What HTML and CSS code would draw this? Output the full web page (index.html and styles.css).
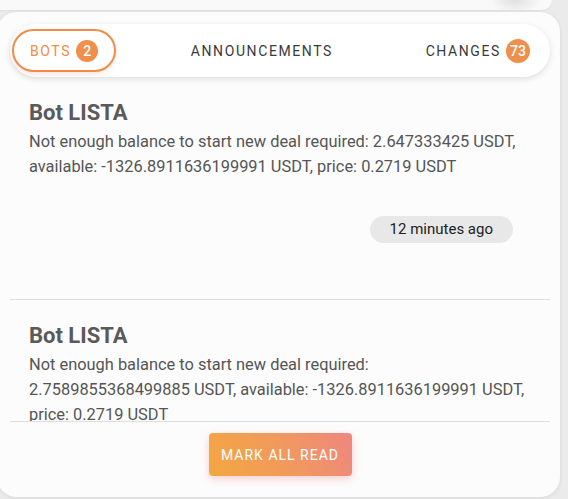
FILE: index.html
```html
<!DOCTYPE html>
<html lang="en">
<head>
<meta charset="utf-8">
<title>Notifications</title>
<link rel="stylesheet" href="styles.css">
</head>
<body>
<div class="top-card"></div>
<div class="panel">
  <nav class="tabs">
    <div class="tab active">BOTS <span class="badge">2</span></div>
    <div class="tab">ANNOUNCEMENTS</div>
    <div class="tab">CHANGES <span class="badge wide">73</span></div>
  </nav>
  <ul class="list">
    <li class="item">
      <h3 class="title">Bot LISTA</h3>
      <p class="body">Not enough balance to start new deal required: 2.647333425 USDT, available: -1326.8911636199991 USDT, price: 0.2719 USDT</p>
      <div class="time-row"><span class="time">12 minutes ago</span></div>
    </li>
    <li class="item">
      <h3 class="title">Bot LISTA</h3>
      <p class="body">Not enough balance to start new deal required: 2.7589855368499885 USDT, available: -1326.8911636199991 USDT, price: 0.2719 USDT</p>
      <div class="time-row"><span class="time">13 minutes ago</span></div>
    </li>
  </ul>
  <div class="footer">
    <button class="mark-btn">MARK ALL READ</button>
  </div>
</div>
</body>
</html>
```
FILE: styles.css
```css
* { box-sizing: border-box; }
html, body { margin: 0; padding: 0; }
body {
  background: #ebebeb;
  font-family: Roboto, "Liberation Sans", sans-serif;
  width: 568px;
  height: 499px;
  overflow: hidden;
}
.top-card {
  height: 10px;
  width: 572px;
  margin-left: -20px;
  border-radius: 0 0 20px 20px;
  background:
    radial-gradient(ellipse 26px 14px at 535px 0px, rgba(0,0,0,0.10), rgba(0,0,0,0) 100%),
    #f9f9f9;
  box-shadow: 0 1px 2px rgba(0,0,0,0.05);
}
.panel {
  margin-top: 2px;
  margin-left: -3px;
  width: 563px;
  height: 485px;
  border-radius: 20px;
  background: #fcfcfc;
  box-shadow: 0 1px 4px rgba(0,0,0,0.08);
  padding: 12px 10px 0 13px;
  display: flex;
  flex-direction: column;
}
.tabs {
  height: 53px;
  flex: none;
  background: #fff;
  border-radius: 27px;
  box-shadow: 0 2px 6px rgba(0,0,0,0.12);
  display: flex;
  justify-content: space-between;
  align-items: center;
  padding: 0 2px;
}
.tab {
  height: 43px;
  padding: 0 16px;
  border: 2px solid transparent;
  border-radius: 22px;
  display: flex;
  align-items: center;
  gap: 5px;
  font-size: 14px;
  font-weight: 400;
  letter-spacing: 1.6px;
  color: #3a3a3a;
}
.tab.active {
  border-color: #f08c47;
  color: #f08c47;
  box-shadow: 0 2px 5px rgba(240,140,140,0.25);
}
.badge {
  display: inline-flex;
  align-items: center;
  justify-content: center;
  min-width: 22px;
  height: 22px;
  border-radius: 11px;
  background: #f08f4b;
  color: #fff;
  font-size: 14px;
  font-weight: 500;
  letter-spacing: 0;
}
.badge.wide {
  min-width: 24px;
  height: 24px;
  border-radius: 12px;
}
.list {
  list-style: none;
  margin: 0;
  padding: 0;
  height: 344px;
  flex: none;
  overflow: hidden;
}
.item {
  padding: 22px 19px 56px;
  border-bottom: 1px solid #dedede;
}
.title {
  margin: 0 0 2px;
  font-size: 22px;
  line-height: 28px;
  font-weight: 700;
  color: #5a5a5a;
}
.body {
  margin: 0;
  font-size: 16.4px;
  line-height: 25.3px;
  color: #555;
}
.time-row {
  display: flex;
  justify-content: flex-end;
  margin-top: 36px;
  padding-right: 18px;
}
.time {
  height: 27px;
  line-height: 27px;
  padding: 0 20px;
  border-radius: 14px;
  background: #e8e8e8;
  color: #222;
  font-size: 15px;
}
.footer {
  border-top: 1px solid #dedede;
  padding-top: 11px;
  display: flex;
  justify-content: center;
}
.mark-btn {
  width: 143px;
  height: 43px;
  border: 0;
  border-radius: 4px;
  background: linear-gradient(65deg, #f4a741 0%, #f19a5c 50%, #ee877f 100%);
  color: #fff;
  font-family: Roboto, "Liberation Sans", sans-serif;
  font-size: 14px;
  font-weight: 400;
  letter-spacing: 1px;
  box-shadow: 0 3px 8px rgba(240,130,130,0.35);
  padding: 0;
}
```
